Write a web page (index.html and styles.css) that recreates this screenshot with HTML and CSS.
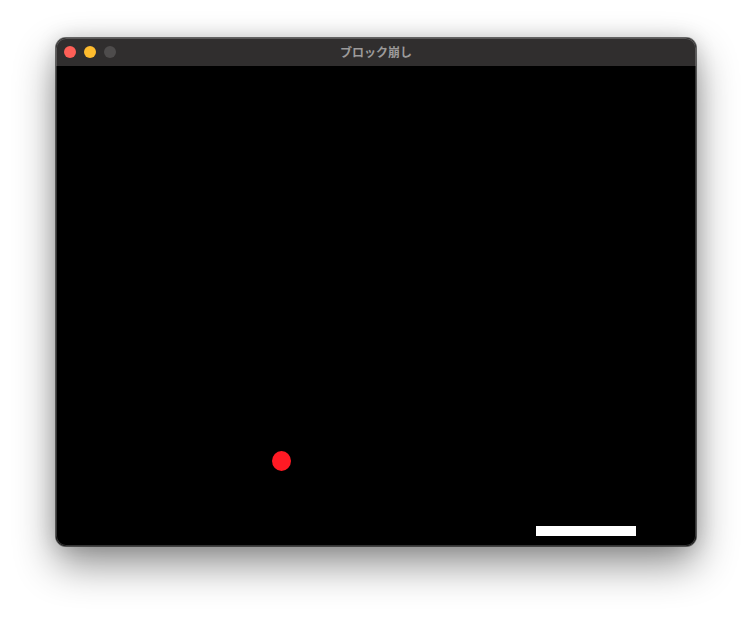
FILE: index.html
```html
<!DOCTYPE html>
<html lang="ja">
<head>
<meta charset="utf-8">
<title>ブロック崩し</title>
<link rel="stylesheet" href="styles.css">
</head>
<body>
<div class="window">
  <div class="titlebar">
    <div class="lights">
      <span class="light red"></span>
      <span class="light yellow"></span>
      <span class="light gray"></span>
    </div>
    <div class="title">ブロック崩し</div>
  </div>
  <div class="canvas">
    <div class="ball"></div>
    <div class="paddle"></div>
  </div>
</div>
</body>
</html>
```
FILE: styles.css
```css
html, body {
  margin: 0;
  padding: 0;
  background: #ffffff;
  width: 752px;
  height: 620px;
  overflow: hidden;
}
body {
  box-sizing: border-box;
  padding: 38px 56px;
  font-family: "Noto Sans CJK JP", "Noto Sans", sans-serif;
}
.window {
  width: 640px;
  border-radius: 10px;
  overflow: hidden;
  background: #000;
  box-shadow: 0 0 0 1px rgba(0,0,0,0.55), 0 18px 40px rgba(0,0,0,0.45), 0 0 20px rgba(0,0,0,0.15);
  position: relative;
}
.window::after {
  content: "";
  position: absolute;
  inset: 0;
  border-radius: 10px;
  box-shadow: inset 0 0 0 1px rgba(255,255,255,0.2);
  pointer-events: none;
}
.titlebar {
  height: 28px;
  background: #302e2e;
  position: relative;
  display: flex;
  align-items: center;
  justify-content: center;
}
.lights {
  position: absolute;
  left: 8px;
  top: 8px;
  display: flex;
  gap: 8px;
}
.light {
  width: 12px;
  height: 12px;
  border-radius: 50%;
  display: block;
}
.red { background: #fe5f57; }
.yellow { background: #febc2e; }
.gray { background: #4e4c4c; }
.title {
  color: #9c9a9a;
  font-size: 12px;
  font-weight: 700;
  line-height: 28px;
}
.canvas {
  height: 480px;
  background: #000;
  position: relative;
}
.ball {
  position: absolute;
  left: 216px;
  top: 385px;
  width: 19px;
  height: 20px;
  border-radius: 50%;
  background: #ff1a24;
}
.paddle {
  position: absolute;
  left: 480px;
  top: 460px;
  width: 100px;
  height: 10px;
  background: #fff;
}
```
